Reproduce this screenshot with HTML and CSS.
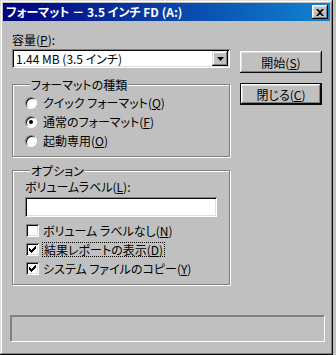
FILE: index.html
```html
<!DOCTYPE html>
<html lang="ja">
<head>
  <meta charset="UTF-8" />
  <title>フォーマット - 3.5 インチ FD (A:)</title>
  <link rel="stylesheet" href="styles.css">
</head>
<body>

  <div class="window">
    <div class="titlebar">
      <span class="title">フォーマット － 3.5 インチ FD (A:)</span>
      <span class="close">
        <svg width="8" height="7" viewBox="0 0 8 7"><path d="M0 0h2l2 2 2-2h2L5 3.5 8 7H6L4 5 2 7H0l3-3.5z" fill="#000"/></svg>
      </span>
    </div>

    <div class="body">
      <div class="main">
        <div class="left">
          <div class="label">容量(<u>P</u>):</div>
          <div class="combo">
            <span class="combo-text">1.44 MB (3.5 インチ)</span>
            <span class="drop">
              <svg width="7" height="4" viewBox="0 0 7 4"><path d="M0 0h7L3.5 4z" fill="#000"/></svg>
            </span>
          </div>

          <fieldset class="group kind">
            <legend>フォーマットの種類</legend>
            <div class="opt"><span class="radio"></span>クイック フォーマット(<u>Q</u>)</div>
            <div class="opt"><span class="radio on"></span>通常のフォーマット(<u>F</u>)</div>
            <div class="opt"><span class="radio"></span>起動専用(<u>O</u>)</div>
          </fieldset>

          <fieldset class="group options">
            <legend>オプション</legend>
            <div class="label">ボリュームラベル(<u>L</u>):</div>
            <div class="field"></div>
            <div class="opt"><span class="check"></span>ボリューム ラベルなし(<u>N</u>)</div>
            <div class="opt"><span class="check on"></span><span class="focus">結果レポートの表示(<u>D</u>)</span></div>
            <div class="opt"><span class="check on"></span>システム ファイルのコピー(<u>Y</u>)</div>
          </fieldset>
        </div>

        <div class="buttons">
          <div class="btn">開始(<u>S</u>)</div>
          <div class="btn default">閉じる(<u>C</u>)</div>
        </div>
      </div>

      <div class="progress"></div>
    </div>
  </div>

</body>
</html>
```

FILE: styles.css
```css
body {
  margin: 0;
  background: #c0c0c0;
  font-family: "Noto Sans CJK JP", "Noto Sans", sans-serif;
  font-size: 12px;
  font-feature-settings: "palt";
  color: #000;
}
u { text-decoration: underline; text-underline-offset: 1px; }

.window {
  width: 333px;
  height: 355px;
  box-sizing: border-box;
  padding: 3px;
  background: #c0c0c0;
  box-shadow: inset -1px -1px #0a0a0a, inset 1px 1px #dfdfdf,
              inset -2px -2px #808080, inset 2px 2px #fff;
  display: flex;
  flex-direction: column;
}

.titlebar {
  height: 18px;
  display: flex;
  align-items: center;
  justify-content: space-between;
  padding: 0 2px 0 3px;
  background: linear-gradient(90deg, #000080, #1084d0);
  color: #fff;
}
.title {
  font-weight: bold;
  line-height: 18px;
  white-space: nowrap;
}
.close {
  width: 16px;
  height: 14px;
  display: flex;
  align-items: center;
  justify-content: center;
  background: #c0c0c0;
  box-shadow: inset -1px -1px #0a0a0a, inset 1px 1px #fff,
              inset -2px -2px #808080, inset 2px 2px #dfdfdf;
}

.body {
  flex: 1;
  display: flex;
  flex-direction: column;
  padding: 12px 5px 10px 7px;
}
.main {
  display: flex;
  padding-left: 2px;
}
.left { width: 218px; }

.label {
  line-height: 13px;
  height: 13px;
  white-space: nowrap;
}

.combo {
  margin-top: 3px;
  height: 19px;
  box-sizing: border-box;
  background: #fff;
  box-shadow: inset 1px 1px #808080, inset -1px -1px #fff,
              inset 2px 2px #0a0a0a, inset -2px -2px #dfdfdf;
  display: flex;
  align-items: center;
  justify-content: space-between;
  padding: 2px;
}
.combo-text {
  padding-left: 2px;
  line-height: 15px;
}
.drop {
  width: 16px;
  height: 15px;
  display: flex;
  align-items: center;
  justify-content: center;
  background: #c0c0c0;
  box-shadow: inset -1px -1px #0a0a0a, inset 1px 1px #dfdfdf,
              inset -2px -2px #808080, inset 2px 2px #fff;
}

.group {
  margin: 10px 0 0;
  padding: 2px 6px 6px 12px;
  border: 1px solid #808080;
  box-shadow: inset 1px 1px #fff, 1px 1px #fff;
}
.group legend {
  padding: 0 1px;
  margin-left: 5px;
  line-height: 13px;
  background: #c0c0c0;
}
.options { margin-top: 7px; padding-top: 3px; }

.opt {
  height: 19px;
  display: flex;
  align-items: center;
  white-space: nowrap;
}

.radio {
  width: 12px;
  height: 12px;
  box-sizing: border-box;
  border-radius: 50%;
  margin-right: 6px;
  background: #fff;
  border: 1px solid;
  border-color: #808080 #fff #fff #808080;
  box-shadow: inset 1px 1px #0a0a0a;
  display: flex;
  align-items: center;
  justify-content: center;
}
.radio.on::after {
  content: "";
  width: 4px;
  height: 4px;
  border-radius: 50%;
  background: #000;
}

.field {
  margin-top: 4px;
  height: 20px;
  width: 192px;
  background: #fff;
  box-shadow: inset 1px 1px #808080, inset -1px -1px #fff,
              inset 2px 2px #0a0a0a, inset -2px -2px #dfdfdf;
}
.options .opt:first-of-type { margin-top: 4px; }
.field + .opt { margin-top: 4px; }

.check {
  width: 13px;
  height: 13px;
  box-sizing: border-box;
  margin: 0 4px 0 1px;
  background: #fff;
  box-shadow: inset 1px 1px #808080, inset -1px -1px #fff,
              inset 2px 2px #0a0a0a, inset -2px -2px #dfdfdf;
  display: flex;
  align-items: center;
  justify-content: center;
}
.check.on::after {
  content: "";
  width: 7px;
  height: 7px;
  background: url("data:image/svg+xml,%3Csvg xmlns='http://www.w3.org/2000/svg' width='7' height='7'%3E%3Cpath d='M0 2h1v1h1v1h1V3h1V2h1V1h1V0h1v3H6v1H5v1H4v1H3v1H2V6H1V5H0z' fill='%23000'/%3E%3C/svg%3E");
}
.focus {
  outline: 1px dotted #000;
  outline-offset: 0;
  padding: 0 1px;
  line-height: 13px;
}

.buttons {
  margin-left: 10px;
  padding-top: 18px;
  display: flex;
  flex-direction: column;
  gap: 10px;
}
.btn {
  width: 82px;
  height: 22px;
  box-sizing: border-box;
  display: flex;
  align-items: center;
  justify-content: center;
  box-shadow: inset -1px -1px #0a0a0a, inset 1px 1px #fff,
              inset -2px -2px #808080, inset 2px 2px #dfdfdf;
}
.btn.default {
  box-shadow: inset 0 0 0 1px #0a0a0a, inset -2px -2px #0a0a0a, inset 2px 2px #fff,
              inset -3px -3px #808080, inset 3px 3px #dfdfdf;
}

.progress {
  margin-top: auto;
  height: 27px;
  box-sizing: border-box;
  border: 1px solid;
  border-color: #808080 #fff #fff #808080;
  box-shadow: inset 1px 1px #808080;
}
```
